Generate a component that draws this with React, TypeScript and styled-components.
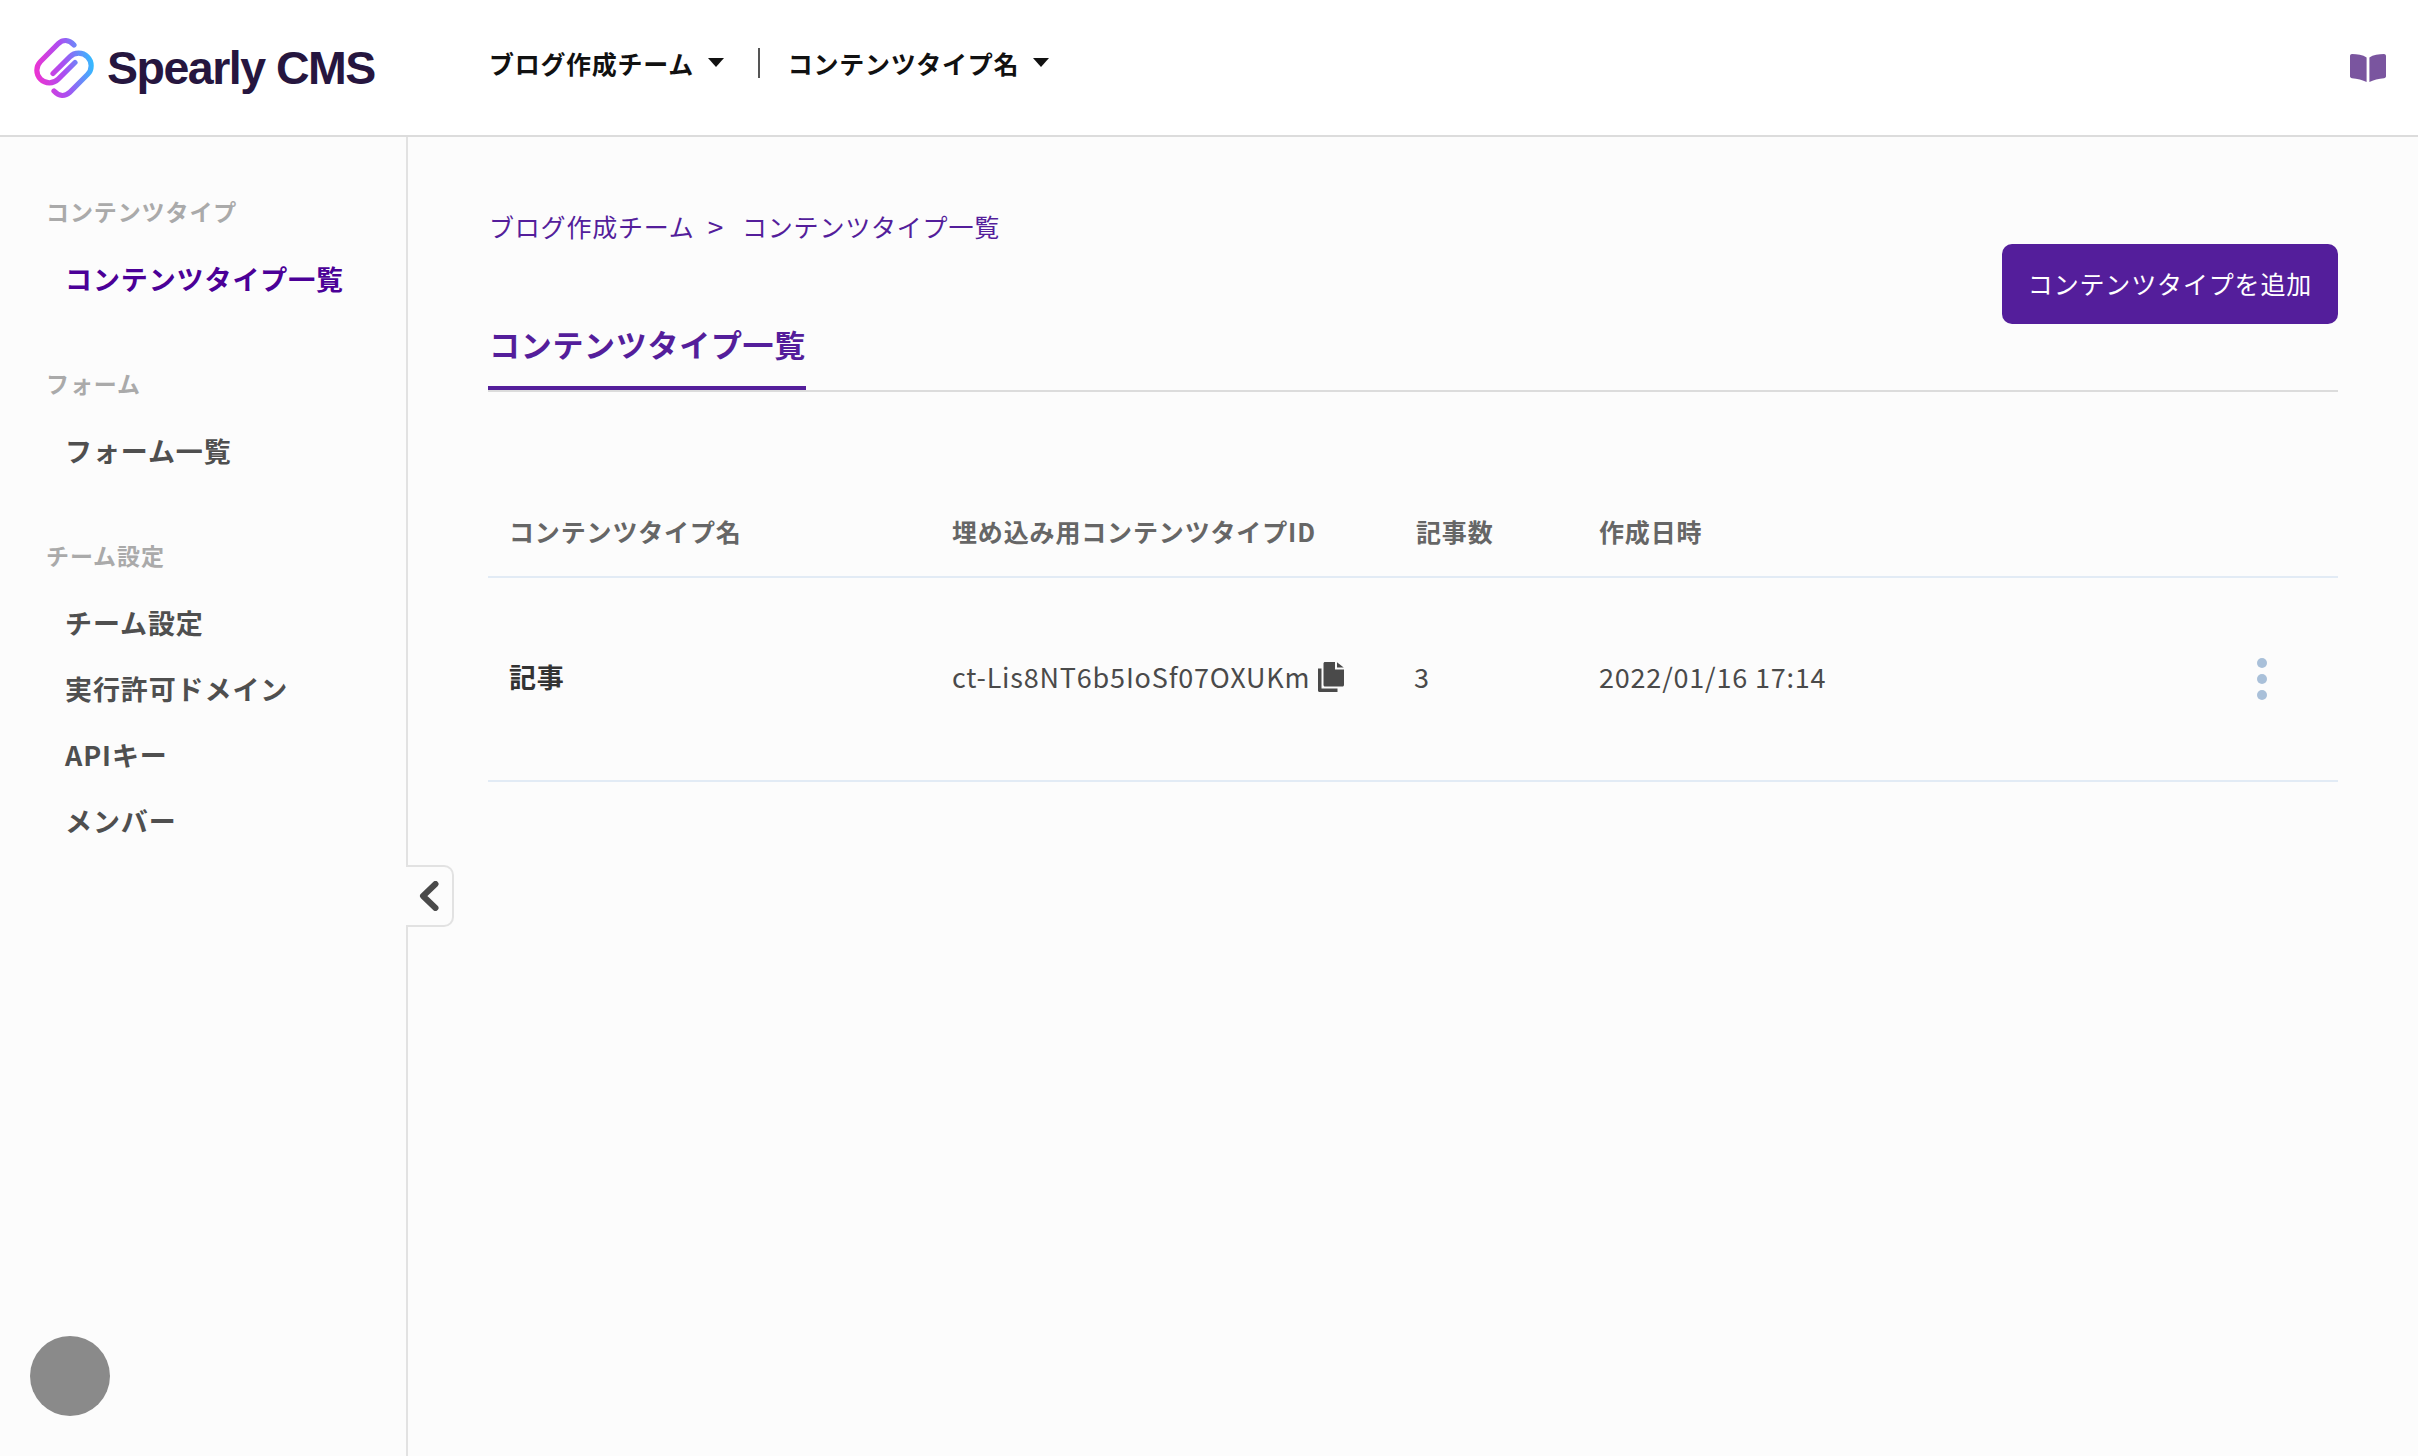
import React from 'react'
import styled, { createGlobalStyle } from 'styled-components'

const GlobalStyle = createGlobalStyle`
  html, body {
    margin: 0;
    padding: 0;
    height: 100%;
    background: #fcfcfc;
    font-family: "Noto Sans CJK JP", "Noto Sans", sans-serif;
  }
  * {
    box-sizing: border-box;
  }
`

const Page = styled.div`
  width: 2418px;
  height: 1456px;
  display: flex;
  flex-direction: column;
  overflow: hidden;
`

const Header = styled.header`
  height: 137px;
  flex: none;
  display: flex;
  align-items: center;
  padding: 0 32px 0 34px;
  background: #ffffff;
  border-bottom: 2px solid #dcdcdc;
`

const Logo = styled.div`
  width: 455px;
  flex: none;
  display: flex;
  align-items: center;
  gap: 13px;
`

const LogoName = styled.span`
  font-family: "Liberation Sans", Arial, sans-serif;
  font-size: 46.5px;
  font-weight: 700;
  letter-spacing: -1.5px;
  color: #26163f;
`

const TopNav = styled.nav`
  display: flex;
  align-items: center;
  margin-bottom: 10px;
`

const NavItem = styled.div`
  display: flex;
  align-items: center;
  gap: 14px;
  font-size: 25px;
  font-weight: 700;
  letter-spacing: 0.7px;
  color: #111111;
`

const Caret = styled.span`
  width: 0;
  height: 0;
  border-style: solid;
  border-width: 9px 8px 0 8px;
  border-color: #111111 transparent transparent transparent;
`

const NavDivider = styled.span`
  width: 2px;
  height: 30px;
  margin: 0 28px 0 34px;
  background: #555555;
`

const GuideLink = styled.div`
  margin-left: auto;
  display: flex;
`

const Body = styled.div`
  flex: 1;
  display: flex;
  min-height: 0;
`

const Sidebar = styled.aside`
  position: relative;
  width: 408px;
  flex: none;
  display: flex;
  flex-direction: column;
  padding: 42px 0 40px;
  border-right: 2px solid #e2e2e2;
`

const SideSection = styled.section`
  margin-bottom: 40px;
`

const SideLabel = styled.div`
  height: 66px;
  display: flex;
  align-items: center;
  padding: 0 0 2px 46px;
  font-size: 23px;
  font-weight: 700;
  letter-spacing: 0.9px;
  color: #aaaaaa;
`

const SideItem = styled.a<{ $active?: boolean }>`
  height: 66px;
  display: flex;
  align-items: center;
  padding-left: 65px;
  font-size: 27px;
  font-weight: 700;
  letter-spacing: 0.9px;
  color: ${({ $active }) => ($active ? '#4b0097' : '#4f4f4f')};
`

const Avatar = styled.div`
  width: 80px;
  height: 80px;
  margin: auto 0 0 30px;
  border-radius: 50%;
  background: #8a8a8a;
`

const CollapseTab = styled.button`
  position: absolute;
  top: 728px;
  right: -48px;
  width: 48px;
  height: 62px;
  padding: 0 0 0 13px;
  margin: 0;
  display: flex;
  align-items: center;
  background: #fcfcfc;
  border: 2px solid #e2e2e2;
  border-left: none;
  border-radius: 0 10px 10px 0;
  &::before {
    content: '';
    position: absolute;
    top: 0;
    bottom: 0;
    left: -2px;
    width: 2px;
    background: #fcfcfc;
  }
`

const Main = styled.main`
  flex: 1;
  min-width: 0;
  padding: 66px 80px 0;
`

const TitleBar = styled.div`
  display: flex;
  justify-content: space-between;
  align-items: flex-start;
  border-bottom: 2px solid #dcdcdc;
`

const TitleColumn = styled.div`
  display: flex;
  flex-direction: column;
  align-items: flex-start;
`

const Breadcrumb = styled.div`
  height: 50px;
  display: flex;
  align-items: center;
  padding: 0 0 4px 1px;
  font-size: 25px;
  letter-spacing: 0.8px;
  color: #541e9b;
`

const BreadcrumbSep = styled.span`
  margin: 0 18px 0 13px;
  font-size: 28px;
  line-height: 1;
`

const PageTab = styled.div`
  margin-top: 68px;
  padding: 0 0 19px 1px;
  line-height: 46px;
  font-size: 31px;
  font-weight: 700;
  letter-spacing: 0.7px;
  color: #541e9b;
  border-bottom: 4px solid #541e9b;
`

const AddButton = styled.button`
  width: 336px;
  height: 80px;
  margin: 41px 0 0;
  padding: 0 0 3px;
  border: none;
  border-radius: 10px;
  background: #541e9b;
  color: #ffffff;
  font-family: inherit;
  font-size: 25px;
  letter-spacing: 0.85px;
`

const Table = styled.div`
  margin-top: 98px;
`

const tableColumns = '443px 464px 183px 1fr 90px'

const HeadRow = styled.div`
  height: 86px;
  display: grid;
  grid-template-columns: ${tableColumns};
  align-items: center;
  padding: 0 0 4px 21px;
  font-size: 25px;
  font-weight: 700;
  letter-spacing: 0.85px;
  color: #666666;
`

const BodyRow = styled.div`
  height: 206px;
  display: grid;
  grid-template-columns: ${tableColumns};
  align-items: center;
  padding: 0 0 6px 21px;
  border-top: 2px solid #e2ebf5;
  border-bottom: 2px solid #e2ebf5;
  font-size: 27px;
  letter-spacing: 0.8px;
  color: #4a4a4a;
`

const NameCell = styled.div`
  font-weight: 700;
  color: #333333;
`

const IdCell = styled.div`
  display: flex;
  align-items: center;
  gap: 8px;
  svg {
    margin-top: 2px;
  }
`

const CountCell = styled.div`
  margin-left: -2px;
`

const MoreDots = styled.div`
  display: flex;
  flex-direction: column;
  gap: 6px;
  margin: 6px 0 0 9px;
`

const Dot = styled.span`
  width: 10px;
  height: 10px;
  border-radius: 50%;
  background: #a9c0d9;
`

const SpearlyMark = () => (
  <svg width="60" height="60" viewBox="0 0 60 60" fill="none">
    <defs>
      <linearGradient id="spearly" gradientUnits="userSpaceOnUse" x1="2" y1="34" x2="58" y2="26">
        <stop offset="0" stopColor="#ea34d2" />
        <stop offset="0.5" stopColor="#a94ff2" />
        <stop offset="1" stopColor="#38b8ff" />
      </linearGradient>
    </defs>
    <g stroke="url(#spearly)" strokeWidth="5.2" strokeLinecap="round">
      <path d="M40 7C35 1.5 29 1.5 24.5 5.5L6.5 23.5A12.5 12.5 0 0 0 24.2 41.2L41 24.5" />
      <path d="M20 53C25 58.5 31 58.5 35.5 54.5L53.5 36.5A12.5 12.5 0 0 0 35.8 18.8L19 35.5" />
    </g>
  </svg>
)

const BookIcon = () => (
  <svg width="36" height="28" viewBox="0 0 36 28" fill="#7a559f">
    <path d="M2 0C7 0 13 1 16.6 3.4V28C13 26 7 24.6 2 24.2C.8 24.1 0 23.3 0 22.2V2C0 .9.9 0 2 0Z" />
    <path d="M34 0C29 0 23 1 19.4 3.4V28C23 26 29 24.6 34 24.2C35.2 24.1 36 23.3 36 22.2V2C36 .9 35.1 0 34 0Z" />
  </svg>
)

const ChevronLeft = () => (
  <svg width="20" height="30" viewBox="0 0 20 30" fill="none">
    <path d="M16.5 3L4 15L16.5 27" stroke="#4a4a4a" strokeWidth="6" strokeLinecap="round" strokeLinejoin="round" />
  </svg>
)

const CopyIcon = () => (
  <svg width="26" height="30" viewBox="0 0 26 30" fill="#4a4a4a">
    <path d="M7 0H17V7.5H26V23C26 23.8 25.3 24.5 24.5 24.5H7C6.2 24.5 5.5 23.8 5.5 23V1.5C5.5 .7 6.2 0 7 0Z" />
    <path d="M19 0.3L25.7 5.5H19Z" />
    <path d="M0 6.5H3.5V26.5H19.5V30H1.5C.7 30 0 29.3 0 28.5Z" />
  </svg>
)

const App = () => (
  <Page>
    <GlobalStyle />
    <Header>
      <Logo>
        <SpearlyMark />
        <LogoName>Spearly CMS</LogoName>
      </Logo>
      <TopNav>
        <NavItem>
          ブログ作成チーム
          <Caret />
        </NavItem>
        <NavDivider />
        <NavItem>
          コンテンツタイプ名
          <Caret />
        </NavItem>
      </TopNav>
      <GuideLink>
        <BookIcon />
      </GuideLink>
    </Header>
    <Body>
      <Sidebar>
        <SideSection>
          <SideLabel>コンテンツタイプ</SideLabel>
          <SideItem $active>コンテンツタイプ一覧</SideItem>
        </SideSection>
        <SideSection>
          <SideLabel>フォーム</SideLabel>
          <SideItem>フォーム一覧</SideItem>
        </SideSection>
        <SideSection>
          <SideLabel>チーム設定</SideLabel>
          <SideItem>チーム設定</SideItem>
          <SideItem>実行許可ドメイン</SideItem>
          <SideItem>APIキー</SideItem>
          <SideItem>メンバー</SideItem>
        </SideSection>
        <Avatar />
        <CollapseTab>
          <ChevronLeft />
        </CollapseTab>
      </Sidebar>
      <Main>
        <TitleBar>
          <TitleColumn>
            <Breadcrumb>
              ブログ作成チーム
              <BreadcrumbSep>&gt;</BreadcrumbSep>
              コンテンツタイプ一覧
            </Breadcrumb>
            <PageTab>コンテンツタイプ一覧</PageTab>
          </TitleColumn>
          <AddButton>コンテンツタイプを追加</AddButton>
        </TitleBar>
        <Table>
          <HeadRow>
            <div>コンテンツタイプ名</div>
            <div>埋め込み用コンテンツタイプID</div>
            <div>記事数</div>
            <div>作成日時</div>
          </HeadRow>
          <BodyRow>
            <NameCell>記事</NameCell>
            <IdCell>
              ct-Lis8NT6b5IoSf07OXUKm
              <CopyIcon />
            </IdCell>
            <CountCell>3</CountCell>
            <div>2022/01/16 17:14</div>
            <MoreDots>
              <Dot />
              <Dot />
              <Dot />
            </MoreDots>
          </BodyRow>
        </Table>
      </Main>
    </Body>
  </Page>
)

export default App
